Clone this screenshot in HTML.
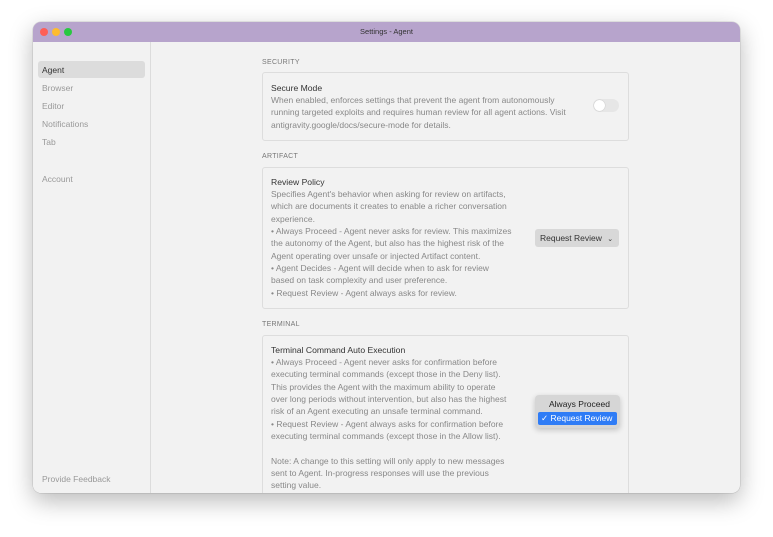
<!DOCTYPE html>
<html><head><meta charset="utf-8"><style>
*{margin:0;padding:0;box-sizing:border-box}
body{width:773px;height:537px;background:#fff;font-family:"Liberation Sans",sans-serif;position:relative;overflow:hidden}
.win{position:absolute;left:33px;top:22px;width:707px;height:471px;border-radius:8px;overflow:hidden;background:#f2f2f2;box-shadow:0 8px 24px rgba(0,0,0,.28),0 0 0 .5px rgba(0,0,0,.15)}
.tb{position:absolute;left:0;top:0;right:0;height:20px;background:#b7a4cc;text-align:center;font-size:7.5px;line-height:20px;color:#333}
.dot{position:absolute;top:6px;width:8px;height:8px;border-radius:50%}
.side{position:absolute;left:0;top:20px;width:118px;bottom:0;border-right:1px solid #dcdcdc;background:#f2f2f2}
.si{position:absolute;left:9px;font-size:8.5px;color:#999}
.hl{position:absolute;left:5px;top:19px;width:107px;height:17px;background:#dcdcdc;border-radius:3px}
.lab{position:absolute;left:229px;font-size:7px;color:#777;letter-spacing:.3px}
.card{position:absolute;left:229px;width:367px;border:1px solid #ddd;border-radius:3px;background:#f2f2f2}
.t{position:absolute;left:238px;font-size:8.6px;color:#333}
.d{position:absolute;left:238px;font-size:8.5px;color:#888;line-height:12.35px;white-space:nowrap}
</style></head><body>
<div class="win">
<div class="tb">Settings - Agent</div>
<div class="dot" style="left:7px;background:#fe5f57"></div>
<div class="dot" style="left:19px;background:#febc2e"></div>
<div class="dot" style="left:31px;background:#28c840"></div>
<div class="side">
<div class="hl"></div>
<div class="si" style="top:23px;color:#333">Agent</div>
<div class="si" style="top:41px">Browser</div>
<div class="si" style="top:59px">Editor</div>
<div class="si" style="top:77px">Notifications</div>
<div class="si" style="top:95px">Tab</div>
<div class="si" style="top:132px">Account</div>
<div class="si" style="top:432px">Provide Feedback</div>
</div>
<div class="lab" style="top:37px">SECURITY</div>
<div class="card" style="top:50px;height:69px"></div>
<div class="t" style="top:61px">Secure Mode</div>
<div class="d" style="top:72px">When enabled, enforces settings that prevent the agent from autonomously<br>running targeted exploits and requires human review for all agent actions. Visit<br>antigravity.google/docs/secure-mode for details.</div>
<div style="position:absolute;left:560px;top:77px;width:26px;height:13px;border-radius:7px;background:#e6e6e6"><div style="position:absolute;left:1px;top:1px;width:11px;height:11px;border-radius:50%;background:#fff;box-shadow:0 0 1px rgba(0,0,0,.3)"></div></div>
<div class="lab" style="top:131px">ARTIFACT</div>
<div class="card" style="top:145px;height:142px"></div>
<div class="t" style="top:155px">Review Policy</div>
<div class="d" style="top:166px">Specifies Agent's behavior when asking for review on artifacts,<br>which are documents it creates to enable a richer conversation<br>experience.<br>• Always Proceed - Agent never asks for review. This maximizes<br>the autonomy of the Agent, but also has the highest risk of the<br>Agent operating over unsafe or injected Artifact content.<br>• Agent Decides - Agent will decide when to ask for review<br>based on task complexity and user preference.<br>• Request Review - Agent always asks for review.</div>
<div style="position:absolute;left:502px;top:207px;width:84px;height:18px;background:#d8d8d8;border-radius:3px;font-size:8.5px;color:#333;line-height:18px;padding-left:5px">Request Review <span style="font-size:7px;margin-left:3px">⌄</span></div>
<div class="lab" style="top:299px">TERMINAL</div>
<div class="card" style="top:313px;height:180px"></div>
<div class="t" style="top:323px">Terminal Command Auto Execution</div>
<div class="d" style="top:334px">• Always Proceed - Agent never asks for confirmation before<br>executing terminal commands (except those in the Deny list).<br>This provides the Agent with the maximum ability to operate<br>over long periods without intervention, but also has the highest<br>risk of an Agent executing an unsafe terminal command.<br>• Request Review - Agent always asks for confirmation before<br>executing terminal commands (except those in the Allow list).<br><br>Note: A change to this setting will only apply to new messages<br>sent to Agent. In-progress responses will use the previous<br>setting value.</div>
<div style="position:absolute;left:502px;top:373px;width:85px;height:33px;background:#d6d6d6;border-radius:4px;box-shadow:0 2px 6px rgba(0,0,0,.2)">
<div style="position:absolute;left:14px;top:4px;font-size:8.5px;color:#222">Always Proceed</div>
<div style="position:absolute;left:3px;top:17px;width:79px;height:13px;background:#2f7cf6;border-radius:2px;color:#fff;font-size:8.5px;line-height:13px;padding-left:3px">✓ Request Review</div>
</div>
</div>
</body></html>
